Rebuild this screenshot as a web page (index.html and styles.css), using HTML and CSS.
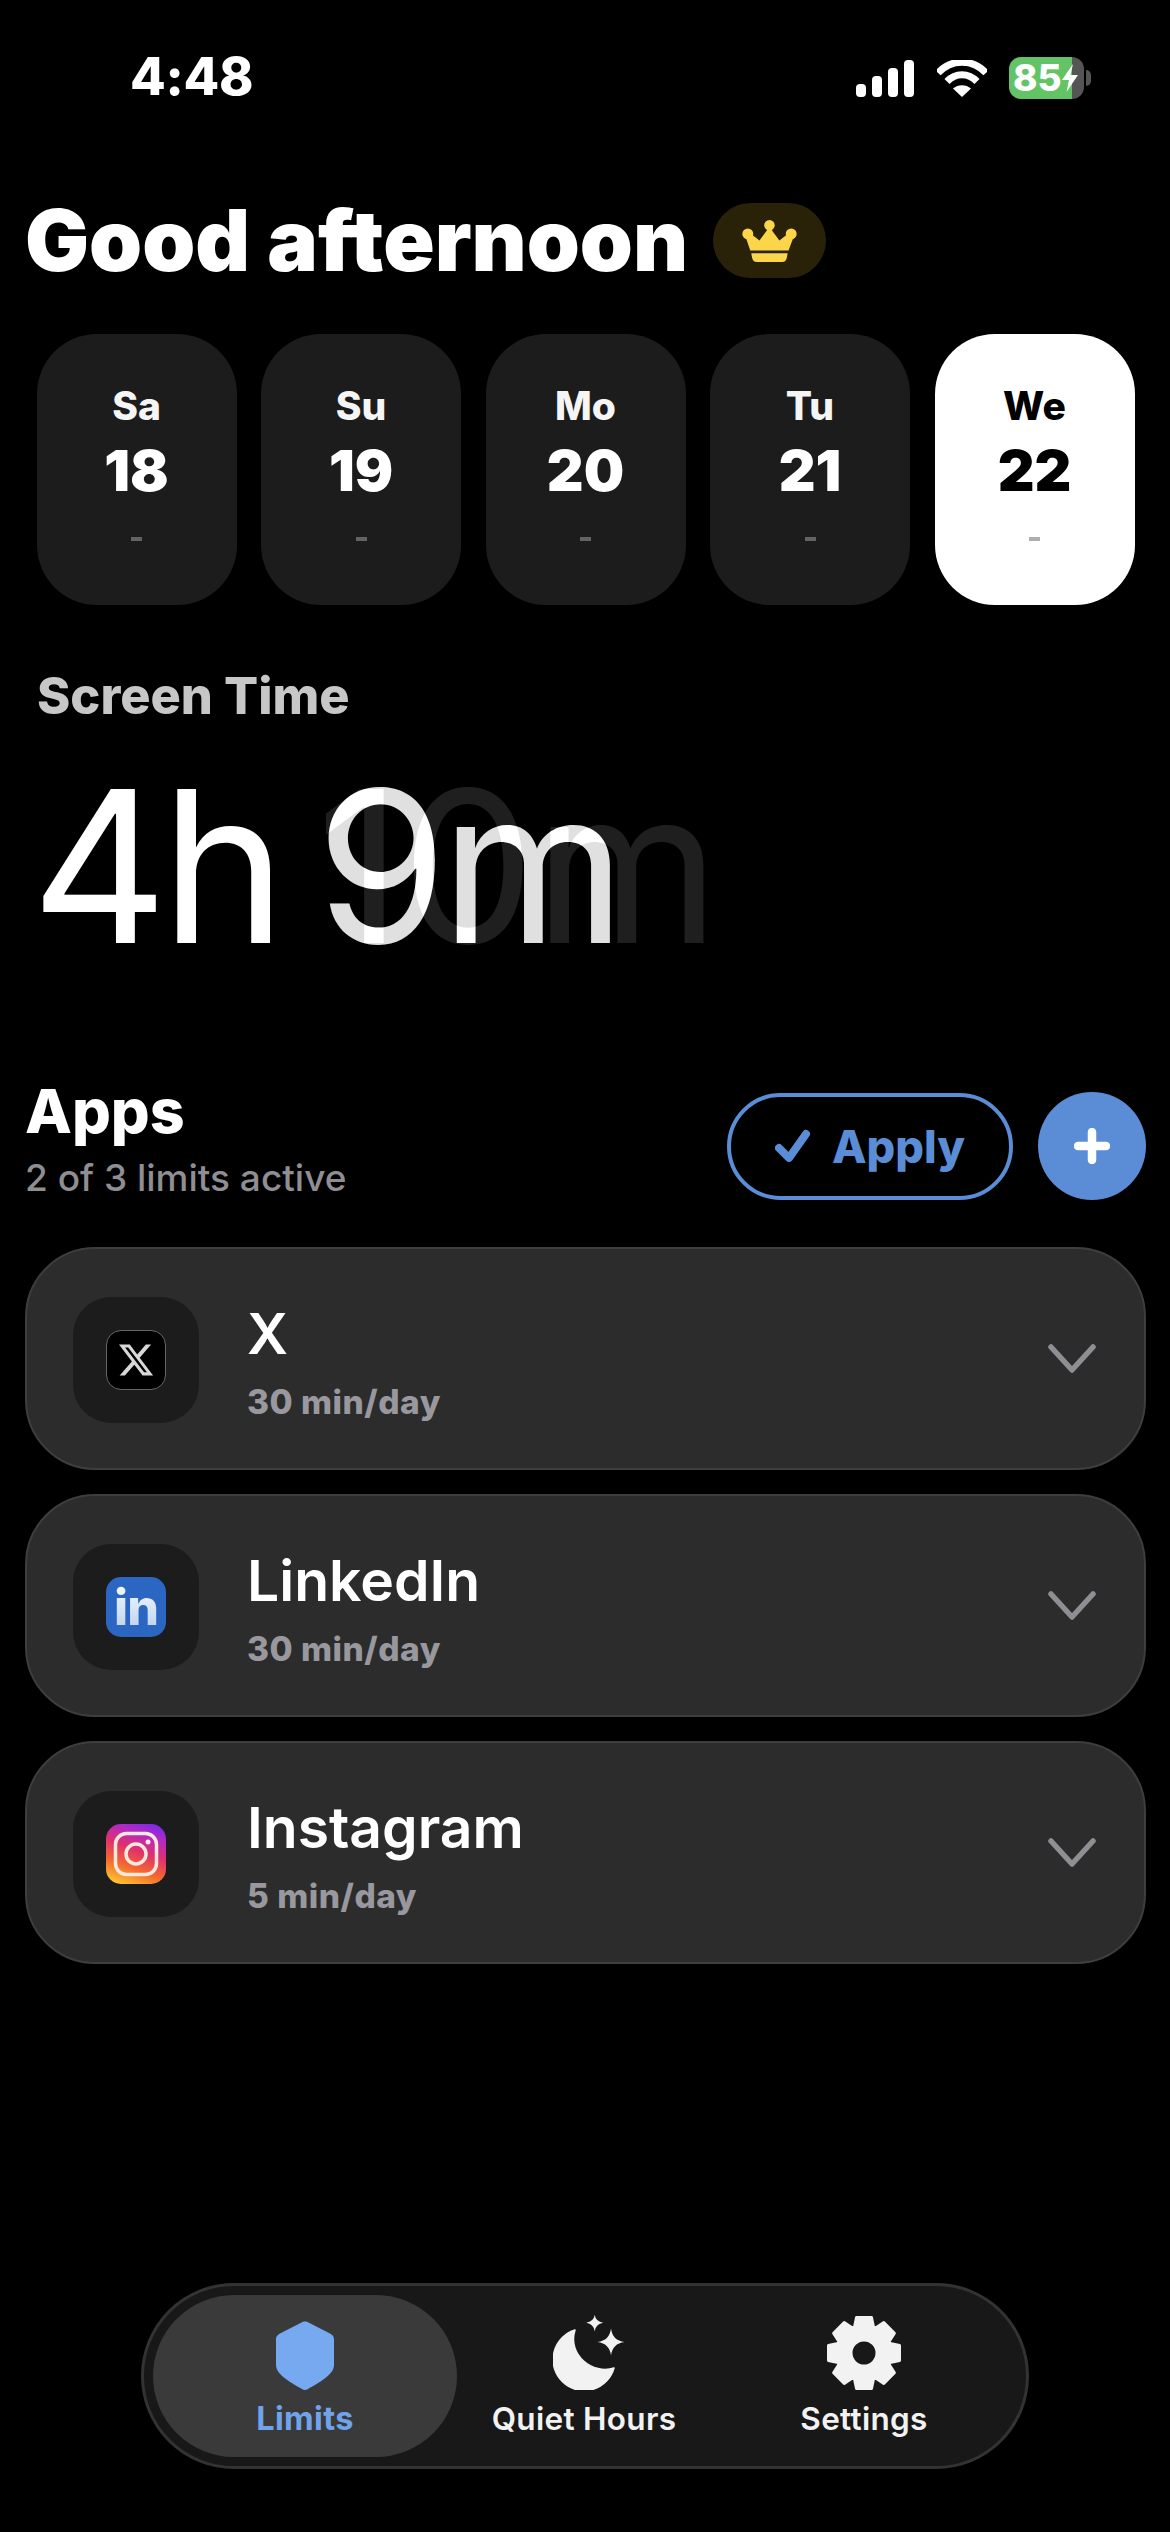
FILE: index.html
```html
<!DOCTYPE html>
<html lang="en">
<head>
<meta charset="utf-8">
<title>Limits</title>
<link rel="stylesheet" href="styles.css">
</head>
<body>
<main class="screen">
  <header class="status">
    <span class="clock">4:48</span>
    <div class="status-icons">
      <svg class="signal" viewBox="0 0 58 37"><rect x="0" y="24" width="10" height="13" rx="4"/><rect x="16" y="16" width="10" height="21" rx="4"/><rect x="32" y="8" width="10" height="29" rx="4"/><rect x="48" y="0" width="10" height="37" rx="4"/></svg>
      <svg class="wifi" viewBox="0 0 50 37"><path d="M1 13C14 -1.500 36 -1.500 49 13" /><path d="M10 21.500C18.500 12.500 31.500 12.500 40 21.500"/><path class="wifi-dot" d="M25 37L16 28.500C21 24 29 24 34 28.500Z"/></svg>
      <div class="battery">
        <div class="battery-body">
          <span class="battery-num">85</span>
          <svg class="bolt" viewBox="0 0 16 28"><path d="M11 0L0 16H7L4.500 28L16 11H8.500Z"/></svg>
        </div>
        <span class="battery-nub"></span>
      </div>
    </div>
  </header>

  <section class="greeting">
    <h1>Good afternoon</h1>
    <div class="crown-pill">
      <svg class="crown" viewBox="0 0 54.700 42.300"><circle cx="27.300" cy="5.300" r="5.300"/><circle cx="5.500" cy="14" r="5.500"/><circle cx="49.200" cy="14" r="5.500"/><path d="M27.300 7L37.300 20.600L47 13L52 16L46.500 30.600H8L3 16L7.500 13L17.300 20.600Z"/><path d="M9 33.600H45.600L44.800 38Q44 42.300 40 42.300H14.600Q10.600 42.300 9.800 38Z"/></svg>
    </div>
  </section>

  <section class="days">
    <div class="day"><span class="day-name">Sa</span><span class="day-num">18</span><span class="day-dash"></span></div>
    <div class="day"><span class="day-name">Su</span><span class="day-num">19</span><span class="day-dash"></span></div>
    <div class="day"><span class="day-name">Mo</span><span class="day-num">20</span><span class="day-dash"></span></div>
    <div class="day"><span class="day-name">Tu</span><span class="day-num">21</span><span class="day-dash"></span></div>
    <div class="day day-active"><span class="day-name">We</span><span class="day-num">22</span><span class="day-dash"></span></div>
  </section>

  <section class="screen-time">
    <h2>Screen Time</h2>
    <div class="big-time">4h <span class="minutes"><span class="min-old">10m</span><span class="min-new">9m</span></span></div>
  </section>

  <section class="apps-head">
    <div class="apps-title">
      <h2>Apps</h2>
      <p>2 of 3 limits active</p>
    </div>
    <div class="apps-actions">
      <button class="apply"><svg class="check" viewBox="0 0 36 34"><path d="M4 19L14 29L31 5"/></svg>Apply</button>
      <button class="add"><svg viewBox="0 0 36 36"><path d="M18 4V32M4 18H32"/></svg></button>
    </div>
  </section>

  <section class="cards">
    <article class="card">
      <div class="icon-well"><div class="app-icon icon-x"><svg viewBox="0 0 24 24"><path d="M18.244 2.250h3.308l-7.227 8.260 8.502 11.240H16.170l-5.214-6.817L4.990 21.750H1.680l7.730-8.835L1.254 2.250H8.080l4.713 6.231zm-1.161 17.520h1.833L7.084 4.126H5.117z"/></svg></div></div>
      <div class="card-text"><h3>X</h3><p>30 min/day</p></div>
      <svg class="chevron" viewBox="0 0 48 30"><path d="M3 3L24 26L45 3"/></svg>
    </article>
    <article class="card">
      <div class="icon-well"><div class="app-icon icon-in"><span>in</span></div></div>
      <div class="card-text"><h3>LinkedIn</h3><p>30 min/day</p></div>
      <svg class="chevron" viewBox="0 0 48 30"><path d="M3 3L24 26L45 3"/></svg>
    </article>
    <article class="card">
      <div class="icon-well"><div class="app-icon icon-ig"><svg viewBox="0 0 60 60"><rect x="9.500" y="9.500" width="41" height="41" rx="11"/><circle cx="30" cy="30" r="10"/><circle class="ig-dot" cx="42" cy="18" r="2.500"/></svg></div></div>
      <div class="card-text"><h3>Instagram</h3><p>5 min/day</p></div>
      <svg class="chevron" viewBox="0 0 48 30"><path d="M3 3L24 26L45 3"/></svg>
    </article>
  </section>

  <nav class="tabbar">
    <a class="tab tab-active">
      <svg class="tab-icon shield" viewBox="0 0 58 69"><path d="M29 .5C30.500 .5 31.500 1 33 1.800L53 12C57 14 58 15.500 58 19V44C58 54 42 62 32 68C30 69.300 28 69.300 26 68C16 62 0 54 0 44V19C0 15.500 1 14 5 12L25 1.800C26.500 1 27.500 .5 29 .5Z"/></svg>
      <span>Limits</span>
    </a>
    <a class="tab">
      <svg class="tab-icon moon" viewBox="0 0 72 75"><path class="moon-body" d="M22 15A31 31 0 1 0 61 53C40 60 14 40 22 15Z"/><path d="M41.700 0Q42.800 6.600 50.200 7.700Q42.800 8.800 41.700 16.200Q40.600 8.800 33.200 7.700Q40.600 6.600 41.700 0Z"/><path d="M58 13.500Q59.500 25.500 71.500 27Q59.500 28.500 58 40.500Q56.500 28.500 44.500 27Q56.500 25.500 58 13.500Z"/></svg>
      <span>Quiet Hours</span>
    </a>
    <a class="tab">
      <svg class="tab-icon gear" viewBox="-37 -37 74 74">
        <path fill-rule="evenodd" d="M-7.500 -35.500H7.500L9.500 -26L11.660 -25.100L19.800 -30.400L30.400 -19.800L25.100 -11.660L26 -9.500L35.500 -7.500V7.500L26 9.500L25.100 11.660L30.400 19.800L19.800 30.400L11.660 25.100L9.500 26L7.500 35.500H-7.500L-9.500 26L-11.660 25.100L-19.800 30.400L-30.400 19.800L-25.100 11.660L-26 9.500L-35.500 7.500V-7.500L-26 -9.500L-25.100 -11.660L-30.400 -19.800L-19.800 -30.400L-11.660 -25.100L-9.500 -26ZM0 -13A13 13 0 1 0 0 13A13 13 0 1 0 0 -13Z"/>
      </svg>
      <span>Settings</span>
    </a>
  </nav>
</main>
</body>
</html>
```
FILE: styles.css
```css
* { box-sizing: border-box; margin: 0; padding: 0; }
html, body { background: #000; }
body { font-family: Inter, "Liberation Sans", sans-serif; color: #fff; }
.screen { width: 1170px; height: 2532px; display: flex; flex-direction: column; overflow: hidden; background: #000; }

.status { height: 100px; padding: 54px 36px 0 130px; display: flex; justify-content: space-between; align-items: center; }
.clock { font-size: 52px; font-weight: 800; line-height: 48px; letter-spacing: -.3px; }
.status-icons { display: flex; align-items: center; gap: 23px; margin-top: 2px; margin-right: 43px; }
.signal { width: 58px; height: 37px; fill: #fff; }
.wifi { width: 50px; height: 37px; fill: none; stroke: #fff; stroke-width: 7; margin-right: -1px; }
.wifi-dot { fill: #fff; stroke: none; }
.battery { display: flex; align-items: center; gap: 2px; }
.battery-body { width: 75px; height: 42px; border-radius: 12px; background: linear-gradient(90deg, #63c466 84%, #555 84%); display: flex; align-items: center; padding-left: 4px; }
.battery-num { font-size: 37px; font-weight: 800; line-height: 42px; }
.bolt { width: 16px; height: 28px; fill: #fff; }
.battery-nub { width: 5px; height: 16px; background: #555; border-radius: 0 8px 8px 0; }

.greeting { display: flex; align-items: center; gap: 25px; padding-left: 25px; height: 75px; margin-top: 103px; }
.greeting h1 { font-size: 85px; font-weight: 900; line-height: 75px; white-space: nowrap; }
.crown-pill { width: 113px; height: 75px; border-radius: 38px; background: #2a2208; display: flex; align-items: center; justify-content: center; }
.crown { width: 55px; height: 42px; fill: #fcd64a; }

.days { display: flex; gap: 24.5px; padding-left: 36.5px; margin-top: 56px; }
.day { width: 200px; height: 271px; border-radius: 60px; background: #1c1c1c; display: flex; flex-direction: column; align-items: center; padding-top: 50px; }
.day-name { font-size: 39px; font-weight: 800; line-height: 44px; color: #f5f5f5; }
.day-num { font-size: 57px; font-weight: 900; line-height: 64px; margin-top: 11px; }
.day-dash { width: 11px; height: 4px; background: #636366; margin-top: 34px; }
.day-active { background: #fff; }
.day-active .day-name, .day-active .day-num { color: #000; }
.day-active .day-dash { background: #aeaeb2; }

.screen-time { padding-left: 37px; margin-top: 62px; }
.screen-time h2 { font-size: 50.500px; font-weight: 800; line-height: 58px; color: #c7c7c7; }
.big-time { font-size: 212px; font-weight: 375; line-height: 230px; letter-spacing: -7px; word-spacing: -16px; margin-top: 26px; margin-left: -6px; white-space: pre; isolation: isolate; }
.minutes { position: relative; display: inline-block; }
.min-new { color: rgba(255,255,255,.88); mix-blend-mode: plus-lighter; }
.min-old { position: absolute; left: 0; top: 0; letter-spacing: -1px; color: rgba(255,255,255,.12); mix-blend-mode: plus-lighter; }

.apps-head { display: flex; justify-content: space-between; align-items: flex-start; padding: 0 24px 0 25px; margin-top: 97px; }
.apps-title h2 { font-size: 61px; font-weight: 800; line-height: 66px; }
.apps-title p { font-size: 37px; font-weight: 500; line-height: 46px; color: #8e8e93; margin-top: 11px; }
.apps-actions { display: flex; align-items: center; gap: 25px; margin-top: 14px; }
.apply { width: 286px; height: 107px; border: 4px solid #5b8dd6; border-radius: 54px; background: none; color: #5b8dd6; font: 800 45px Inter, sans-serif; display: flex; align-items: center; justify-content: center; gap: 21px; }
.check { width: 36px; height: 34px; fill: none; stroke: #5b8dd6; stroke-width: 8; stroke-linecap: round; stroke-linejoin: round; }
.add { width: 108px; height: 108px; border: 0; border-radius: 50%; background: #5b8dd6; display: flex; align-items: center; justify-content: center; }
.add svg { width: 36px; height: 36px; fill: none; stroke: #fff; stroke-width: 8.500; stroke-linecap: round; }

.cards { display: flex; flex-direction: column; gap: 24px; padding: 0 24px 0 25px; margin-top: 46px; }
.card { height: 223px; border-radius: 70px; background: #2c2c2c; border: 2px solid #3e3e3e; display: flex; align-items: center; padding: 0 48px 0 46px; }
.icon-well { width: 126px; height: 126px; border-radius: 38px; background: #1c1c1c; display: flex; align-items: center; justify-content: center; flex: none; margin-top: 2px; }
.app-icon { width: 60px; height: 60px; border-radius: 15px; display: flex; align-items: center; justify-content: center; overflow: hidden; }
.icon-x { background: #000; border: 1px solid #666; }
.icon-x svg { width: 38px; height: 38px; fill: #d8d8d8; }
.icon-in { background: #2a66c2; }
.icon-in span { font-size: 50px; font-weight: 800; line-height: 60px; letter-spacing: -1px; background: linear-gradient(180deg, #fff, #b4cdee); -webkit-background-clip: text; background-clip: text; color: transparent; }
.icon-ig { background: linear-gradient(20deg, #fdc830 5%, #f46b2e 30%, #e1306c 55%, #b02ac4 78%, #6a2bf0 100%); }
.icon-ig svg { width: 60px; height: 60px; fill: none; stroke: #fde8dc; stroke-width: 3.500; }
.ig-dot { fill: #fde8dc; stroke: none; }
.card-text { flex: 1; margin: 6px 0 0 48px; }
.card-text h3 { font-size: 57px; font-weight: 600; line-height: 68px; }
.card-text p { font-size: 33.500px; font-weight: 800; line-height: 42px; color: #98989e; margin-top: 13px; letter-spacing: .5px; }
.chevron { width: 48px; height: 30px; fill: none; stroke: #8e8e93; stroke-width: 5.500; stroke-linecap: round; stroke-linejoin: round; }

.tabbar { width: 888px; height: 186px; margin: auto 0 63px 141px; border-radius: 93px; background: #181818; border: 3px solid #333; display: flex; align-items: center; padding: 0 9px; }
.tab { flex: 0 0 280px; height: 162px; border-radius: 81px; display: flex; flex-direction: column; align-items: center; justify-content: flex-end; padding-bottom: 20px; font-size: 31.500px; font-weight: 600; line-height: 36px; color: #f2f2f2; }
.tab-active { flex: 0 0 304px; margin-right: -13px; background: #3a3a3a; color: #6fa4ec; font-size: 32.500px; font-weight: 700; }
.tab span { margin-top: 11px; letter-spacing: .3px; }
.shield { width: 58px; height: 69px; fill: #76a9f0; }
.moon { width: 72px; height: 75px; fill: #f2f2f2; margin-left: 10px; }
.moon-body { stroke: #f2f2f2; stroke-width: 1.500; stroke-linejoin: round; }
.gear { width: 74px; height: 74px; fill: #f2f2f2; stroke: #f2f2f2; stroke-width: 3; stroke-linejoin: round; }
```
